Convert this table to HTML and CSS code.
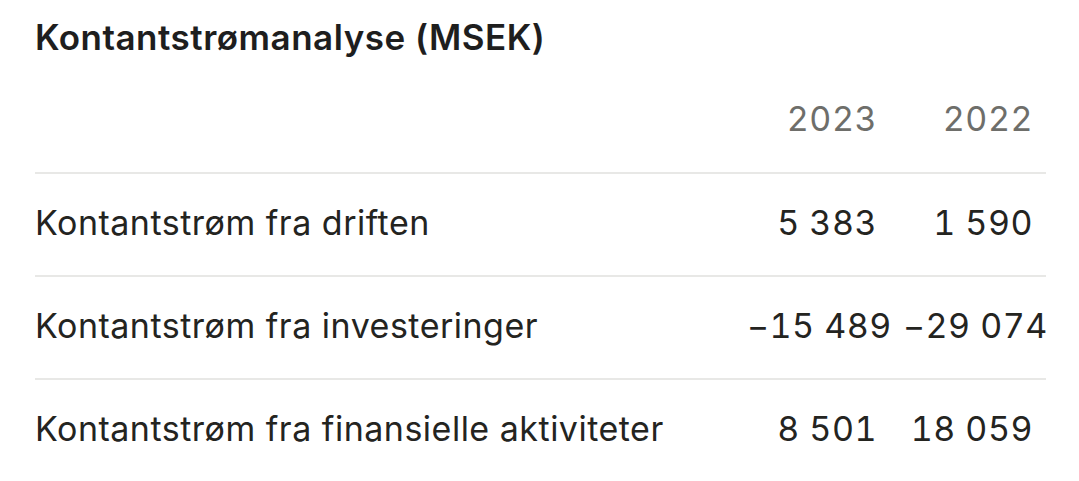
FILE: index.html
```html
<!DOCTYPE html>
<html lang="no">
<head>
    <meta charset="UTF-8">
    <meta name="viewport" content="width=device-width, initial-scale=1.0">
    <title>Kontantstrømanalyse</title>
    <link rel="stylesheet" href="styles.css">
</head>
<body>
    <div class="cashflow">
        <h2 class="title">Kontantstrømanalyse (MSEK)</h2>

        <div class="row head">
            <div class="label"></div>
            <div class="num">2023</div>
            <div class="num">2022</div>
        </div>
        <div class="row">
            <div class="label">Kontantstrøm fra driften</div>
            <div class="num">5 383</div>
            <div class="num">1 590</div>
        </div>
        <div class="row">
            <div class="label">Kontantstrøm fra investeringer</div>
            <div class="num">−15 489</div>
            <div class="num">−29 074</div>
        </div>
        <div class="row">
            <div class="label">Kontantstrøm fra finansielle aktiviteter</div>
            <div class="num">8 501</div>
            <div class="num">18 059</div>
        </div>
    </div>
</body>
</html>
```

FILE: styles.css
```css
body {
    margin: 0;
    background-color: #fff;
    font-family: Inter, "Liberation Sans", sans-serif;
    color: #24241f;
}
.cashflow {
    padding: 12px 33px 0 35px;
}
.title {
    margin: 0 0 36px;
    font-size: 35px;
    font-weight: 600;
    line-height: 50px;
    letter-spacing: 0.5px;
    color: #1e1e1e;
}
.row {
    display: grid;
    grid-template-columns: 1fr 156px 156px;
    align-items: center;
    height: 97px;
    padding-bottom: 4px;
    border-top: 2px solid #e8e8e6;
    font-size: 34px;
    letter-spacing: 0.5px;
}
.row.head {
    height: auto;
    border-top: none;
    padding-bottom: 33px;
    color: #6e6e6a;
}
.num {
    padding: 0 13px;
    text-align: right;
    white-space: nowrap;
    font-variant-numeric: tabular-nums;
}
```
